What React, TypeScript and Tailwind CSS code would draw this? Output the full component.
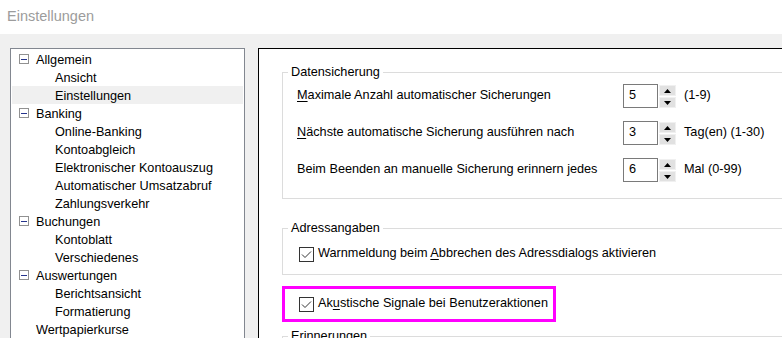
import type { ReactNode } from "react";

type TreeItem = {
  label: string;
  level: 0 | 1;
  expanded?: boolean;
  selected?: boolean;
};

const TREE: TreeItem[] = [
  { label: "Allgemein", level: 0, expanded: true },
  { label: "Ansicht", level: 1 },
  { label: "Einstellungen", level: 1, selected: true },
  { label: "Banking", level: 0, expanded: true },
  { label: "Online-Banking", level: 1 },
  { label: "Kontoabgleich", level: 1 },
  { label: "Elektronischer Kontoauszug", level: 1 },
  { label: "Automatischer Umsatzabruf", level: 1 },
  { label: "Zahlungsverkehr", level: 1 },
  { label: "Buchungen", level: 0, expanded: true },
  { label: "Kontoblatt", level: 1 },
  { label: "Verschiedenes", level: 1 },
  { label: "Auswertungen", level: 0, expanded: true },
  { label: "Berichtsansicht", level: 1 },
  { label: "Formatierung", level: 1 },
  { label: "Wertpapierkurse", level: 0 },
];

function Expander() {
  return (
    <span className="w-[10px] h-[10px] border border-[#919191] bg-white flex items-center justify-center">
      <span className="w-[6px] h-[1px] bg-[#26348c]" />
    </span>
  );
}

function TreeRow({ item }: { item: TreeItem }) {
  return (
    <div
      className={`h-[18px] flex items-center ${
        item.selected ? "bg-[#f0f0f0]" : ""
      } ${item.level === 0 ? "pl-[7px]" : "pl-[43px]"}`}
    >
      {item.level === 0 && (
        <span className="w-[17px] flex">{item.expanded && <Expander />}</span>
      )}
      <span className="leading-[18px] pt-[2px] whitespace-nowrap">{item.label}</span>
    </div>
  );
}

function Checkbox() {
  return (
    <svg width="15" height="15" viewBox="0 0 15 15" className="shrink-0">
      <rect x="0.5" y="0.5" width="14" height="14" fill="#fff" stroke="#333" />
      <polyline
        points="3,7.5 6,10.5 12,4.5"
        fill="none"
        stroke="#333"
        strokeWidth="1"
      />
    </svg>
  );
}

function SpinBox({ value }: { value: string }) {
  return (
    <div className="flex gap-[1px] h-[24px]">
      <div className="w-[35px] h-[24px] border border-[#7a7a7a] bg-white pl-[5px] flex items-center">
        {value}
      </div>
      <div className="w-[17px] flex flex-col gap-[1px] pt-[1px]">
        <div className="h-[11px] bg-[#e1e1e1] border border-[#f0f0f0] flex items-center justify-center">
          <svg width="7" height="4" viewBox="0 0 7 4">
            <polygon points="0,4 7,4 3.5,0" fill="#000" />
          </svg>
        </div>
        <div className="h-[11px] bg-[#e1e1e1] border border-[#f0f0f0] flex items-center justify-center">
          <svg width="7" height="4" viewBox="0 0 7 4">
            <polygon points="0,0 7,0 3.5,4" fill="#000" />
          </svg>
        </div>
      </div>
    </div>
  );
}

function SpinRow({
  label,
  value,
  hint,
}: {
  label: ReactNode;
  value: string;
  hint: string;
}) {
  return (
    <div className="flex items-center h-[24px]">
      <span className="w-[326px] whitespace-nowrap">{label}</span>
      <SpinBox value={value} />
      <span className="ml-[8px] whitespace-nowrap">{hint}</span>
    </div>
  );
}

function U({ children }: { children: ReactNode }) {
  return <span className="underline underline-offset-[2px]">{children}</span>;
}

export default function App() {
  return (
    <div className="w-[782px] h-[338px] overflow-hidden bg-[#f0f0f0] font-['Liberation_Sans',Arial,sans-serif] text-[12.7px] text-black">
      <div className="h-[34px] bg-white pl-[7px] pt-[7px] text-[14.5px] leading-[18px] text-[#9c9c9c]">
        Einstellungen
      </div>

      <div className="flex gap-[13px] pl-[10px] pt-[14px]">
        <div className="w-[235px] h-[300px] shrink-0 border border-[#828790] bg-white p-[1px]">
          {TREE.map((item) => (
            <TreeRow key={item.label} item={item} />
          ))}
        </div>

        <div className="w-[560px] h-[300px] shrink-0 border border-black bg-white pl-[23px] pt-[15px]">
          <fieldset className="border border-[#dcdcdc] pl-[5px] pt-[4px] pb-[16px]">
            <legend className="px-[3px] leading-[16px]">Datensicherung</legend>
            <div className="flex flex-col gap-[13px] pl-[9px]">
              <SpinRow
                label={
                  <>
                    <U>M</U>aximale Anzahl automatischer Sicherungen
                  </>
                }
                value="5"
                hint="(1-9)"
              />
              <SpinRow
                label={
                  <>
                    <U>N</U>ächste automatische Sicherung ausführen nach
                  </>
                }
                value="3"
                hint="Tag(en) (1-30)"
              />
              <SpinRow
                label="Beim Beenden an manuelle Sicherung erinnern jedes"
                value="6"
                hint="Mal (0-99)"
              />
            </div>
          </fieldset>

          <fieldset className="mt-[21px] border border-[#dcdcdc] pl-[5px] pt-[9px] pb-[11px]">
            <legend className="px-[3px] leading-[16px]">Adressangaben</legend>
            <label className="flex items-center gap-[4px] h-[18px] pl-[11px]">
              <Checkbox />
              <span className="whitespace-nowrap">
                Warnmeldung beim <U>A</U>bbrechen des Adressdialogs aktivieren
              </span>
            </label>
          </fieldset>

          <div className="mt-[11px] w-[274px] h-[36px] border-[3px] border-[#ff00ff] flex items-center gap-[4px] pl-[14px]">
            <Checkbox />
            <span className="whitespace-nowrap">
              Ak<U>u</U>stische Signale bei Benutzeraktionen
            </span>
          </div>

          <fieldset className="mt-[6px] border border-[#dcdcdc] pl-[5px] h-[40px]">
            <legend className="px-[3px] leading-[16px]">Erinnerungen</legend>
          </fieldset>
        </div>
      </div>
    </div>
  );
}
